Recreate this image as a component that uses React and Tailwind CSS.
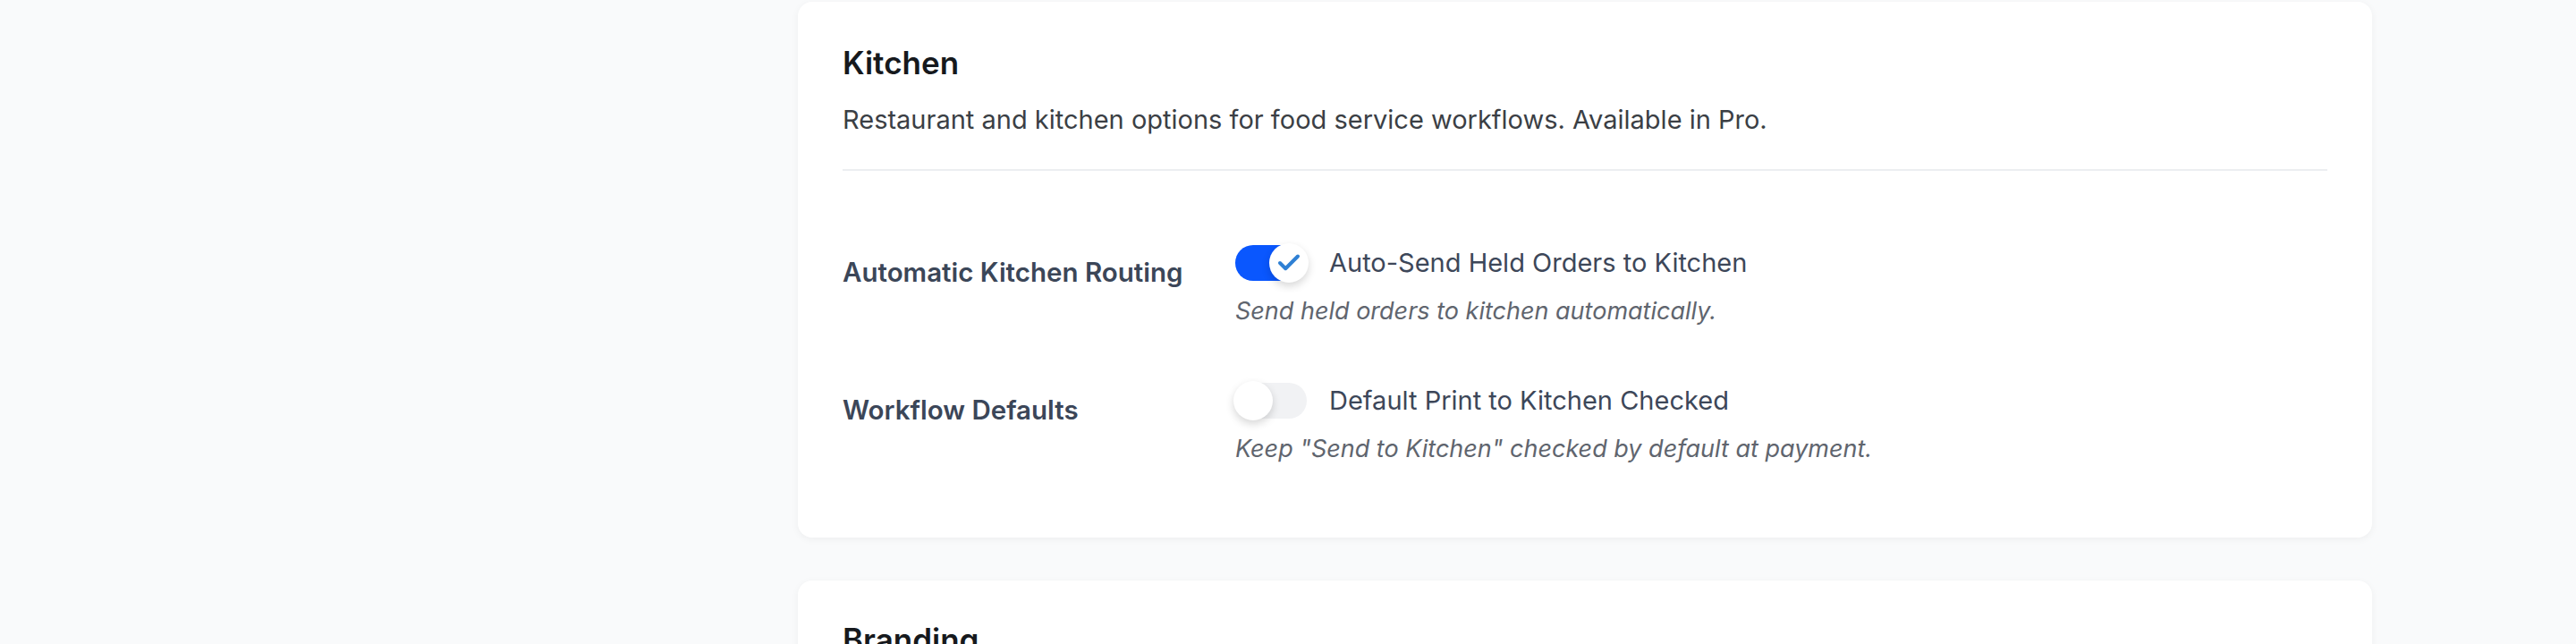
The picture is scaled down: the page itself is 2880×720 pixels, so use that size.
import { Check } from "lucide-react";

function Toggle({ on }) {
  return (
    <div
      className={
        "relative h-[40px] w-[80px] shrink-0 rounded-full " +
        (on ? "bg-[#0a57fe]" : "bg-[#f1f2f4]")
      }
    >
      <div
        className={
          "absolute top-[-2px] flex h-[44px] w-[44px] items-center justify-center rounded-full bg-white shadow-[0_4px_10px_rgba(0,0,0,0.16)] " +
          (on ? "right-[-2px]" : "left-[-2px]")
        }
      >
        {on && <Check size={30} strokeWidth={3.2} className="text-[#2f80d4]" />}
      </div>
    </div>
  );
}

function SettingRow({ label, on, title, hint }) {
  return (
    <div className="grid grid-cols-[439px_1fr]">
      <div className="pt-[10px] text-[29.5px] leading-[40px] font-semibold text-[#3b4658]">
        {label}
      </div>
      <div>
        <div className="flex items-center gap-[25px]">
          <Toggle on={on} />
          <span className="text-[29px] leading-[40px] text-[#3d4759]">{title}</span>
        </div>
        <p className="mt-[17px] text-[27px] leading-[33px] italic text-[#60656e]">{hint}</p>
      </div>
    </div>
  );
}

export default function App() {
  return (
    <div
      className="min-h-screen bg-[#f9fafb] pl-[892px] pt-[2px]"
      style={{ fontFamily: "Inter, 'Noto Sans', sans-serif" }}
    >
      <div className="w-[1760px] space-y-[48px]">
        <section className="rounded-[16px] bg-white px-[50px] pt-[46px] pb-[83px] shadow-[0_2px_8px_rgba(0,0,0,0.05)]">
          <div className="border-b-2 border-[#eceef1] pb-[35px]">
            <h2 className="text-[35px] leading-[44px] font-semibold text-[#16191d]">Kitchen</h2>
            <p className="mt-[22px] text-[29px] leading-[40px] text-[#3b3f45]">
              Restaurant and kitchen options for food service workflows. Available in Pro.
            </p>
          </div>

          <div className="mt-[83px] space-y-[64px]">
            <SettingRow
              label="Automatic Kitchen Routing"
              on
              title="Auto-Send Held Orders to Kitchen"
              hint="Send held orders to kitchen automatically."
            />
            <SettingRow
              label="Workflow Defaults"
              on={false}
              title="Default Print to Kitchen Checked"
              hint={'Keep "Send to Kitchen" checked by default at payment.'}
            />
          </div>
        </section>

        <section className="rounded-[16px] bg-white px-[50px] pt-[44px] pb-[84px] shadow-[0_2px_8px_rgba(0,0,0,0.05)]">
          <h2 className="text-[35px] leading-[44px] font-semibold text-[#16191d]">Branding</h2>
          <p className="mt-[22px] text-[29px] leading-[40px] text-[#3b3f45]">
            Logo, colours and receipt appearance.
          </p>
        </section>
      </div>
    </div>
  );
}
